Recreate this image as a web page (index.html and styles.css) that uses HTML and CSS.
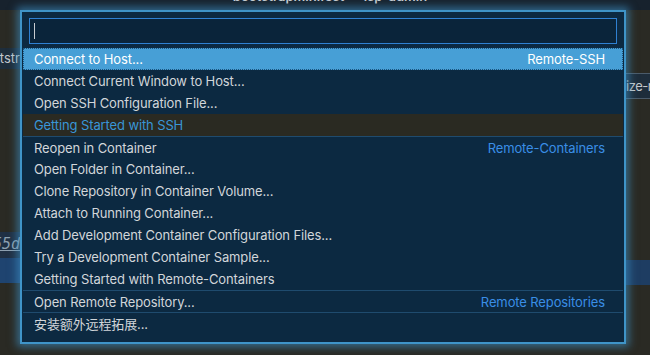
FILE: index.html
```html
<!DOCTYPE html>
<html lang="en">
  <head>
    <meta charset="UTF-8" />
    <title>Remote Window</title>
    <link rel="stylesheet" href="styles.css">
  </head>
  <body>
    <div class="window">
      <div class="titlebar">
        <span class="title">bootstrapminifest — lsp-admin</span>
      </div>

      <div class="backdrop">
        <div class="side side-left">
          <div class="tab tab-left">tstr</div>
          <div class="ref">55d</div>
          <div class="band"></div>
        </div>
        <div class="side side-right">
          <div class="tab tab-right">ize-r</div>
          <div class="band band-right"></div>
        </div>
      </div>

      <div class="quick-pick">
        <div class="qp-input">
          <span class="caret"></span>
        </div>

        <ul class="qp-list">
          <li class="qp-row is-selected">
            <span class="qp-text">Connect to Host...</span>
            <span class="qp-label">Remote-SSH</span>
          </li>
          <li class="qp-row"><span class="qp-text">Connect Current Window to Host...</span></li>
          <li class="qp-row"><span class="qp-text">Open SSH Configuration File...</span></li>
          <li class="qp-row is-hover">
            <span class="qp-text qp-link">Getting Started with SSH</span>
          </li>
          <li class="qp-row has-sep">
            <span class="qp-text">Reopen in Container</span>
            <span class="qp-label">Remote-Containers</span>
          </li>
          <li class="qp-row"><span class="qp-text">Open Folder in Container...</span></li>
          <li class="qp-row"><span class="qp-text">Clone Repository in Container Volume...</span></li>
          <li class="qp-row"><span class="qp-text">Attach to Running Container...</span></li>
          <li class="qp-row"><span class="qp-text">Add Development Container Configuration Files...</span></li>
          <li class="qp-row"><span class="qp-text">Try a Development Container Sample...</span></li>
          <li class="qp-row"><span class="qp-text">Getting Started with Remote-Containers</span></li>
          <li class="qp-row has-sep">
            <span class="qp-text">Open Remote Repository...</span>
            <span class="qp-label">Remote Repositories</span>
          </li>
          <li class="qp-row has-sep"><span class="qp-text">安装额外远程拓展...</span></li>
        </ul>
      </div>
    </div>
  </body>
</html>
```

FILE: styles.css
```css
:root {
  --bg-dark: #2a2a24;
  --qp-bg: #0c2941;
  --qp-border: #3f94c8;
  --qp-text: #d2d6da;
  --qp-blue: #3a8ee6;
  --qp-sep: #1f4b6e;
  --qp-selected: #479fd6;
}

* {
  margin: 0;
  padding: 0;
  box-sizing: border-box;
}

body {
  font-family: Inter, "Noto Sans CJK SC", sans-serif;
  font-size: 13px;
  background: var(--bg-dark);
  color: var(--qp-text);
  width: 650px;
  height: 355px;
  overflow: hidden;
}

.window {
  position: relative;
  width: 650px;
  height: 355px;
}

/* title bar, mostly hidden behind the widget */
.titlebar {
  height: 10px;
  background: #17222d;
  overflow: hidden;
  display: flex;
  justify-content: center;
}

.title {
  font-size: 13px;
  font-weight: 600;
  line-height: 13px;
  margin-top: -10px;
  padding-left: 10px;
  color: #c8ccd0;
}

/* editor bits peeking out on both sides */
.backdrop {
  display: flex;
  justify-content: space-between;
  height: 345px;
}

.side {
  width: 24px;
  display: flex;
  flex-direction: column;
  overflow: hidden;
}

.side-left {
  width: 20px;
}

.tab {
  height: 21px;
  line-height: 20px;
  background: #1e2d3b;
  color: #c4c8cc;
  white-space: nowrap;
}

.tab-left {
  margin-top: 38px;
  direction: rtl;
  text-align: left;
}

.tab-right {
  margin-top: 63px;
  height: 26px;
  line-height: 24px;
  border-top: 1px solid #4b5b6a;
  border-bottom: 1px solid #4b5b6a;
  letter-spacing: -0.5px;
}

.ref {
  margin-top: 163px;
  height: 26px;
  background: #203044;
  color: #8ea0b0;
  font-style: italic;
  font-family: "DejaVu Sans Mono", monospace;
  font-size: 15px;
  line-height: 24px;
  text-decoration: underline;
  white-space: nowrap;
  direction: rtl;
}

.band {
  height: 25px;
  background: #1f4470;
}

.band-right {
  margin-top: 161px;
  background: #1e3d62;
}

/* quick pick widget, floats over the editor */
.quick-pick {
  position: absolute;
  left: 20px;
  top: 10px;
  width: 606px;
  height: 334px;
  background: var(--qp-bg);
  border: 2px solid var(--qp-border);
  box-shadow: 0 0 8px 3px rgba(64, 150, 205, 0.6);
  padding: 6px 1px 8px;
}

.qp-input {
  margin: 0 6px;
  height: 26px;
  background: #0a243a;
  border: 1px solid #2f80d2;
  display: flex;
  align-items: center;
  padding-left: 4px;
}

.caret {
  width: 1px;
  height: 16px;
  background: #c8ccd0;
}

.qp-list {
  list-style: none;
  margin-top: 4px;
}

.qp-row {
  height: 22px;
  display: flex;
  align-items: center;
  justify-content: space-between;
  padding: 0 18px 0 11px;
  white-space: nowrap;
  letter-spacing: -0.12px;
}

.qp-row.has-sep {
  border-top: 1px solid var(--qp-sep);
}

.qp-row.is-selected {
  background: var(--qp-selected);
  color: #ffffff;
  outline: 1px dotted #1b5580;
  outline-offset: -1px;
}

.qp-row.is-selected .qp-label {
  color: #ffffff;
}

.qp-row.is-hover {
  background: #2a2a22;
}

.qp-link {
  color: #3996d6;
}

.qp-label {
  color: var(--qp-blue);
}
```
